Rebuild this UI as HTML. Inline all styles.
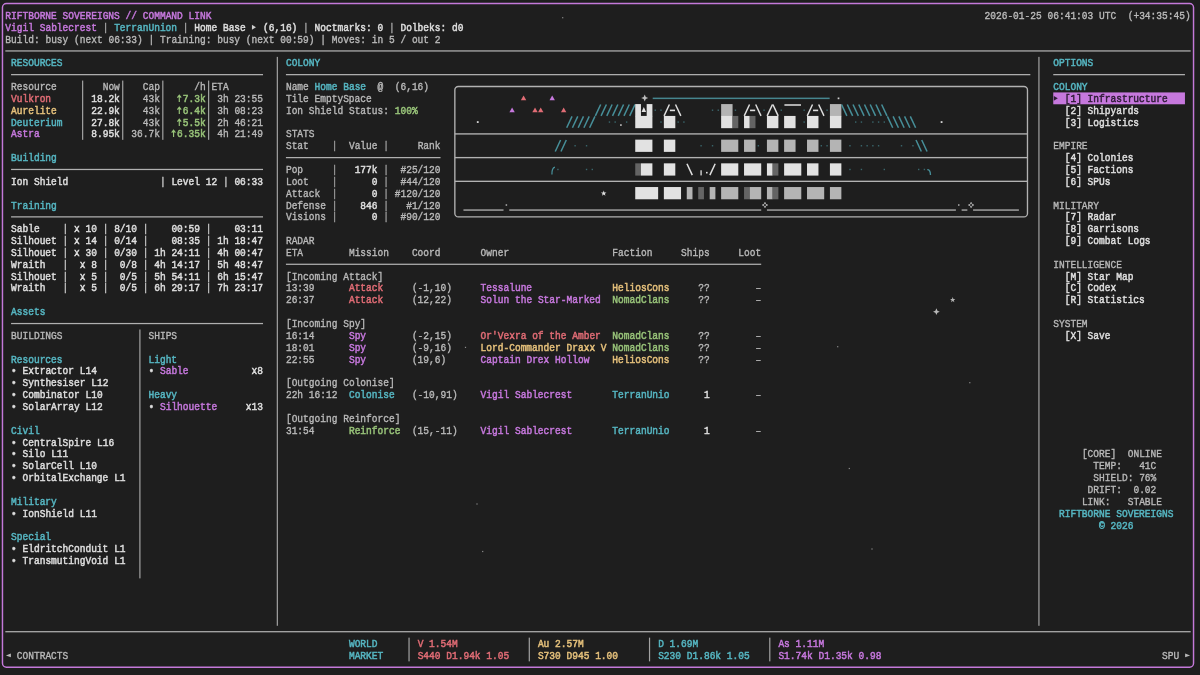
<!DOCTYPE html>
<html><head><meta charset="utf-8"><title>Riftborne Sovereigns // Command Link</title>
<style>
html,body{margin:0;padding:0;background:#1e1e1e;}
#scr{position:relative;width:1200px;height:675px;overflow:hidden;background:#1e1e1e;font-family:"Liberation Mono",monospace;font-size:9.5423px;line-height:11.8525px;letter-spacing:0;color:#b4b4b4;filter:blur(0.45px);}
#scr svg{position:absolute;left:0;top:0;}
.row{position:absolute;left:0;width:1200px;height:10.7750px;line-height:10.7750px;transform:scaleY(1.1);transform-origin:0 0;will-change:transform;}
.row i{position:absolute;top:0;display:block;font-style:normal;white-space:pre;height:10.7750px;}
.g{color:#b9b9b9;-webkit-text-stroke:0.34px currentColor;}
.w{color:#dedede;-webkit-text-stroke:0.45px currentColor;}
.p{color:#c678dd;-webkit-text-stroke:0.45px currentColor;}
.c{color:#56b6c2;-webkit-text-stroke:0.45px currentColor;}
.r{color:#e06c75;-webkit-text-stroke:0.45px currentColor;}
.y{color:#e5c07b;-webkit-text-stroke:0.45px currentColor;}
.n{color:#98c379;-webkit-text-stroke:0.45px currentColor;}
.d{color:#9c9c9c;-webkit-text-stroke:0.34px currentColor;}
.k{color:#2d1b35;-webkit-text-stroke:0.45px currentColor;}
.h{color:#a8a8a8;-webkit-text-stroke:0.34px currentColor;}
.v{color:#c4c4c4;-webkit-text-stroke:0.4px currentColor;}
</style></head><body>
<div id="scr">
<svg width="1200" height="675" viewBox="0 0 1200 675" shape-rendering="geometricPrecision">
<rect x="5.33" y="50.32" width="1185.34" height="1.25" fill="#b0b0b0"/>
<rect x="11.06" y="74.02" width="251.96" height="1.25" fill="#b0b0b0"/>
<rect x="82.04" y="80.57" width="1.2" height="59.26" fill="#a2a2a2"/>
<rect x="122.12" y="80.57" width="1.2" height="59.26" fill="#a2a2a2"/>
<rect x="162.21" y="80.57" width="1.2" height="59.26" fill="#a2a2a2"/>
<rect x="208.02" y="80.57" width="1.2" height="59.26" fill="#a2a2a2"/>
<path d="M179.29,101.90 L179.29,95.40 M177.39,97.70 L179.29,95.30 L181.19,97.70" fill="none" stroke="#98c379" stroke-width="1.15" stroke-linejoin="miter"/>
<path d="M179.29,113.90 L179.29,107.40 M177.39,109.70 L179.29,107.30 L181.19,109.70" fill="none" stroke="#98c379" stroke-width="1.15" stroke-linejoin="miter"/>
<path d="M179.29,125.90 L179.29,119.40 M177.39,121.70 L179.29,119.30 L181.19,121.70" fill="none" stroke="#98c379" stroke-width="1.15" stroke-linejoin="miter"/>
<path d="M173.56,136.90 L173.56,130.40 M171.66,132.70 L173.56,130.30 L175.46,132.70" fill="none" stroke="#98c379" stroke-width="1.15" stroke-linejoin="miter"/>
<rect x="11.06" y="168.84" width="251.96" height="1.25" fill="#b0b0b0"/>
<rect x="11.06" y="216.25" width="251.96" height="1.25" fill="#b0b0b0"/>
<rect x="11.06" y="322.92" width="251.96" height="1.25" fill="#b0b0b0"/>
<rect x="139.30" y="329.47" width="1.2" height="248.90" fill="#a2a2a2"/>
<rect x="276.73" y="56.87" width="1.2" height="568.92" fill="#a2a2a2"/>
<rect x="285.92" y="74.02" width="744.42" height="1.25" fill="#b0b0b0"/>
<rect x="285.92" y="156.99" width="154.61" height="1.25" fill="#b0b0b0"/>
<rect x="285.92" y="263.66" width="475.28" height="1.25" fill="#b0b0b0"/>
<rect x="1038.33" y="56.87" width="1.2" height="568.92" fill="#a2a2a2"/>
<rect x="1053.25" y="74.02" width="131.70" height="1.25" fill="#b0b0b0"/>
<rect x="1053.25" y="92.42" width="131.70" height="11.8525" fill="#c678dd"/>
<rect x="5.33" y="631.09" width="1185.34" height="1.25" fill="#b0b0b0"/>
<rect x="408.44" y="637.64" width="1.2" height="23.71" fill="#a2a2a2"/>
<rect x="528.69" y="637.64" width="1.2" height="23.71" fill="#a2a2a2"/>
<rect x="648.94" y="637.64" width="1.2" height="23.71" fill="#a2a2a2"/>
<rect x="769.19" y="637.64" width="1.2" height="23.71" fill="#a2a2a2"/>
<polygon points="251.93,24.84 255.93,27.24 251.93,29.64" fill="#cfcfcf"/>
<polygon points="1053.81,95.95 1057.81,98.35 1053.81,100.75" fill="#2d1b35"/>
<polygon points="10.90,653.52 5.90,655.42 10.90,657.32" fill="#b9b9b9"/>
<polygon points="1185.11,653.52 1190.11,655.42 1185.11,657.32" fill="#b9b9b9"/>
<rect x="2.47" y="3.53" width="1191.07" height="663.74" rx="4" ry="4" fill="none" stroke="#c479da" stroke-width="1.45"/>
<rect x="454.85" y="86.50" width="572.63" height="130.38" rx="3.5" ry="3.5" fill="none" stroke="#b2b2b2" stroke-width="1.35"/>
<rect x="454.85" y="133.24" width="572.63" height="1.35" fill="#b2b2b2"/>
<rect x="454.85" y="156.94" width="572.63" height="1.35" fill="#b2b2b2"/>
<rect x="454.85" y="180.65" width="572.63" height="1.35" fill="#b2b2b2"/>
<polygon points="523.56,95.60 526.26,100.30 520.86,100.30" fill="#e06c75"/>
<polygon points="552.19,95.60 554.89,100.30 549.49,100.30" fill="#c678dd"/>
<polygon points="644.72,94.55 645.77,97.00 648.22,98.05 645.77,99.10 644.72,101.55 643.67,99.10 641.22,98.05 643.67,97.00" fill="#bcbcbc"/>
<rect x="652.71" y="97.60" width="176.92" height="1.5" fill="#46868f"/>
<rect x="837.66" y="97.50" width="1.7" height="1.7" fill="#d0d0d0"/>
<polygon points="512.11,107.45 514.81,112.15 509.41,112.15" fill="#c678dd"/>
<polygon points="535.02,107.45 537.72,112.15 532.32,112.15" fill="#e06c75"/>
<polygon points="540.74,107.45 543.44,112.15 538.04,112.15" fill="#e06c75"/>
<polygon points="563.65,107.45 566.35,112.15 560.95,112.15" fill="#e06c75"/>
<line x1="595.34" y1="115.93" x2="600.67" y2="104.48" stroke="#478f99" stroke-width="1.5"/>
<line x1="601.07" y1="115.93" x2="606.39" y2="104.48" stroke="#478f99" stroke-width="1.5"/>
<line x1="606.79" y1="115.93" x2="612.12" y2="104.48" stroke="#478f99" stroke-width="1.5"/>
<line x1="612.52" y1="115.93" x2="617.85" y2="104.48" stroke="#478f99" stroke-width="1.5"/>
<line x1="618.25" y1="115.93" x2="623.57" y2="104.48" stroke="#478f99" stroke-width="1.5"/>
<line x1="623.97" y1="115.93" x2="629.30" y2="104.48" stroke="#478f99" stroke-width="1.5"/>
<line x1="629.70" y1="115.93" x2="635.03" y2="104.48" stroke="#478f99" stroke-width="1.5"/>
<rect x="635.23" y="104.08" width="5.73" height="12.25" fill="#e2e2e2"/>
<rect x="646.68" y="104.08" width="5.73" height="12.25" fill="#e2e2e2"/>
<polygon points="643.82,106.88 646.12,112.08 641.52,112.08" fill="#e2e2e2"/>
<rect x="654.57" y="109.50" width="1.4" height="1.4" fill="#3a676d"/>
<rect x="660.29" y="109.50" width="1.4" height="1.4" fill="#3a676d"/>
<rect x="711.83" y="109.50" width="1.4" height="1.4" fill="#3a676d"/>
<rect x="717.56" y="109.50" width="1.4" height="1.4" fill="#3a676d"/>
<rect x="734.74" y="109.50" width="1.4" height="1.4" fill="#3a676d"/>
<rect x="763.37" y="109.50" width="1.4" height="1.4" fill="#3a676d"/>
<rect x="780.55" y="109.50" width="1.4" height="1.4" fill="#3a676d"/>
<rect x="803.45" y="109.50" width="1.4" height="1.4" fill="#3a676d"/>
<rect x="826.36" y="109.50" width="1.4" height="1.4" fill="#3a676d"/>
<line x1="664.06" y1="115.93" x2="669.38" y2="104.48" stroke="#e0e0e0" stroke-width="1.45"/>
<rect x="669.88" y="109.60" width="5.13" height="1.6" fill="#e0e0e0"/>
<line x1="675.51" y1="104.48" x2="680.84" y2="115.93" stroke="#e0e0e0" stroke-width="1.45"/>
<rect x="721.12" y="104.08" width="11.45" height="12.25" fill="#b4b4b4"/>
<line x1="744.23" y1="115.93" x2="749.55" y2="104.48" stroke="#e0e0e0" stroke-width="1.45"/>
<rect x="750.05" y="109.60" width="5.13" height="1.6" fill="#e0e0e0"/>
<line x1="755.68" y1="104.48" x2="761.00" y2="115.93" stroke="#e0e0e0" stroke-width="1.45"/>
<line x1="767.13" y1="115.93" x2="772.46" y2="104.48" stroke="#e0e0e0" stroke-width="1.5"/>
<line x1="772.86" y1="104.48" x2="778.18" y2="115.93" stroke="#e0e0e0" stroke-width="1.5"/>
<rect x="784.41" y="104.25" width="16.58" height="1.5" fill="#e0e0e0"/>
<line x1="807.22" y1="115.93" x2="812.54" y2="104.48" stroke="#e0e0e0" stroke-width="1.45"/>
<rect x="813.04" y="109.60" width="5.13" height="1.6" fill="#e0e0e0"/>
<line x1="818.67" y1="104.48" x2="823.99" y2="115.93" stroke="#e0e0e0" stroke-width="1.45"/>
<rect x="829.92" y="104.08" width="11.45" height="12.25" fill="#b4b4b4"/>
<line x1="841.57" y1="104.48" x2="846.90" y2="115.93" stroke="#478f99" stroke-width="1.5"/>
<line x1="847.30" y1="104.48" x2="852.63" y2="115.93" stroke="#478f99" stroke-width="1.5"/>
<line x1="853.03" y1="104.48" x2="858.35" y2="115.93" stroke="#478f99" stroke-width="1.5"/>
<line x1="858.75" y1="104.48" x2="864.08" y2="115.93" stroke="#478f99" stroke-width="1.5"/>
<line x1="864.48" y1="104.48" x2="869.80" y2="115.93" stroke="#478f99" stroke-width="1.5"/>
<line x1="870.20" y1="104.48" x2="875.53" y2="115.93" stroke="#478f99" stroke-width="1.5"/>
<line x1="875.93" y1="104.48" x2="881.26" y2="115.93" stroke="#478f99" stroke-width="1.5"/>
<line x1="881.66" y1="104.48" x2="886.98" y2="115.93" stroke="#478f99" stroke-width="1.5"/>
<rect x="476.85" y="121.16" width="1.8" height="1.8" fill="#d8d8d8"/>
<line x1="566.71" y1="127.78" x2="572.04" y2="116.33" stroke="#478f99" stroke-width="1.5"/>
<line x1="572.44" y1="127.78" x2="577.76" y2="116.33" stroke="#478f99" stroke-width="1.5"/>
<line x1="578.16" y1="127.78" x2="583.49" y2="116.33" stroke="#478f99" stroke-width="1.5"/>
<line x1="583.89" y1="127.78" x2="589.22" y2="116.33" stroke="#478f99" stroke-width="1.5"/>
<line x1="589.62" y1="127.78" x2="594.94" y2="116.33" stroke="#478f99" stroke-width="1.5"/>
<rect x="608.76" y="121.36" width="1.4" height="1.4" fill="#3a676d"/>
<rect x="614.48" y="121.36" width="1.4" height="1.4" fill="#3a676d"/>
<rect x="625.94" y="121.36" width="1.4" height="1.4" fill="#3a676d"/>
<rect x="620.11" y="124.26" width="1.6" height="1.6" fill="#c8c8c8"/>
<rect x="635.23" y="115.93" width="17.18" height="12.25" fill="#e2e2e2"/>
<rect x="660.29" y="121.36" width="1.4" height="1.4" fill="#3a676d"/>
<rect x="677.47" y="121.36" width="1.4" height="1.4" fill="#3a676d"/>
<rect x="683.20" y="121.36" width="1.4" height="1.4" fill="#3a676d"/>
<rect x="803.45" y="121.36" width="1.4" height="1.4" fill="#3a676d"/>
<rect x="854.99" y="121.36" width="1.4" height="1.4" fill="#3a676d"/>
<rect x="860.72" y="121.36" width="1.4" height="1.4" fill="#3a676d"/>
<rect x="872.17" y="121.36" width="1.4" height="1.4" fill="#3a676d"/>
<rect x="877.89" y="121.36" width="1.4" height="1.4" fill="#3a676d"/>
<rect x="883.62" y="121.36" width="1.4" height="1.4" fill="#3a676d"/>
<rect x="663.86" y="115.93" width="11.45" height="12.25" fill="#e2e2e2"/>
<rect x="721.12" y="115.93" width="11.45" height="12.25" fill="#e2e2e2"/>
<rect x="732.57" y="115.93" width="5.73" height="12.25" fill="#646464"/>
<rect x="744.03" y="115.93" width="5.73" height="12.25" fill="#e2e2e2"/>
<rect x="749.75" y="115.93" width="5.73" height="12.25" fill="#646464"/>
<rect x="766.93" y="115.93" width="11.45" height="12.25" fill="#e2e2e2"/>
<rect x="784.11" y="115.93" width="11.45" height="12.25" fill="#e2e2e2"/>
<rect x="807.02" y="115.93" width="11.45" height="12.25" fill="#e2e2e2"/>
<rect x="829.92" y="115.93" width="11.45" height="12.25" fill="#e2e2e2"/>
<line x1="887.38" y1="116.33" x2="892.71" y2="127.78" stroke="#478f99" stroke-width="1.5"/>
<line x1="893.11" y1="116.33" x2="898.44" y2="127.78" stroke="#478f99" stroke-width="1.5"/>
<line x1="898.84" y1="116.33" x2="904.16" y2="127.78" stroke="#478f99" stroke-width="1.5"/>
<line x1="904.56" y1="116.33" x2="909.89" y2="127.78" stroke="#478f99" stroke-width="1.5"/>
<line x1="910.29" y1="116.33" x2="915.62" y2="127.78" stroke="#478f99" stroke-width="1.5"/>
<rect x="940.68" y="121.16" width="1.8" height="1.8" fill="#d8d8d8"/>
<line x1="555.26" y1="151.49" x2="560.58" y2="140.03" stroke="#478f99" stroke-width="1.5"/>
<line x1="560.98" y1="151.49" x2="566.31" y2="140.03" stroke="#478f99" stroke-width="1.5"/>
<rect x="574.40" y="145.06" width="1.4" height="1.4" fill="#3a676d"/>
<rect x="585.85" y="145.06" width="1.4" height="1.4" fill="#3a676d"/>
<rect x="700.38" y="145.06" width="1.4" height="1.4" fill="#3a676d"/>
<rect x="711.83" y="145.06" width="1.4" height="1.4" fill="#3a676d"/>
<rect x="757.64" y="145.06" width="1.4" height="1.4" fill="#3a676d"/>
<rect x="820.63" y="145.06" width="1.4" height="1.4" fill="#3a676d"/>
<rect x="826.36" y="145.06" width="1.4" height="1.4" fill="#3a676d"/>
<rect x="849.26" y="145.06" width="1.4" height="1.4" fill="#3a676d"/>
<rect x="860.72" y="145.06" width="1.4" height="1.4" fill="#3a676d"/>
<rect x="866.44" y="145.06" width="1.4" height="1.4" fill="#3a676d"/>
<rect x="872.17" y="145.06" width="1.4" height="1.4" fill="#3a676d"/>
<rect x="877.89" y="145.06" width="1.4" height="1.4" fill="#3a676d"/>
<rect x="900.80" y="145.06" width="1.4" height="1.4" fill="#3a676d"/>
<rect x="912.25" y="145.06" width="1.4" height="1.4" fill="#3a676d"/>
<rect x="635.23" y="139.63" width="17.18" height="12.25" fill="#e2e2e2"/>
<rect x="663.86" y="139.63" width="11.45" height="12.25" fill="#e2e2e2"/>
<rect x="721.12" y="139.63" width="17.18" height="12.25" fill="#b4b4b4"/>
<rect x="744.03" y="139.63" width="11.45" height="12.25" fill="#b4b4b4"/>
<rect x="766.93" y="139.63" width="11.45" height="12.25" fill="#b4b4b4"/>
<rect x="784.11" y="139.63" width="11.45" height="12.25" fill="#b4b4b4"/>
<rect x="807.02" y="139.63" width="11.45" height="12.25" fill="#b4b4b4"/>
<rect x="829.92" y="139.63" width="11.45" height="12.25" fill="#b4b4b4"/>
<line x1="916.02" y1="140.03" x2="921.34" y2="151.49" stroke="#478f99" stroke-width="1.5"/>
<line x1="921.74" y1="140.03" x2="927.07" y2="151.49" stroke="#478f99" stroke-width="1.5"/>
<path d="M551.93,174.54 Q551.73,167.94 554.93,167.14" fill="none" stroke="#478f99" stroke-width="1.3"/>
<rect x="557.22" y="168.77" width="1.4" height="1.4" fill="#3a676d"/>
<rect x="585.85" y="168.77" width="1.4" height="1.4" fill="#3a676d"/>
<rect x="591.58" y="168.77" width="1.4" height="1.4" fill="#3a676d"/>
<rect x="849.26" y="168.77" width="1.4" height="1.4" fill="#3a676d"/>
<rect x="860.72" y="168.77" width="1.4" height="1.4" fill="#3a676d"/>
<rect x="883.62" y="168.77" width="1.4" height="1.4" fill="#3a676d"/>
<rect x="917.98" y="168.77" width="1.4" height="1.4" fill="#3a676d"/>
<rect x="923.70" y="168.77" width="1.4" height="1.4" fill="#3a676d"/>
<rect x="635.23" y="163.34" width="5.73" height="12.25" fill="#646464"/>
<rect x="640.95" y="163.34" width="11.45" height="12.25" fill="#e2e2e2"/>
<rect x="663.86" y="163.34" width="11.45" height="12.25" fill="#e2e2e2"/>
<line x1="686.96" y1="163.74" x2="692.29" y2="175.19" stroke="#e0e0e0" stroke-width="1.5"/>
<rect x="700.43" y="170.27" width="1.3" height="5.13" fill="#e0e0e0"/>
<rect x="706.01" y="171.87" width="1.6" height="1.6" fill="#e0e0e0"/>
<line x1="709.87" y1="175.19" x2="715.19" y2="163.74" stroke="#e0e0e0" stroke-width="1.5"/>
<rect x="721.12" y="163.34" width="17.18" height="12.25" fill="#e2e2e2"/>
<rect x="744.03" y="163.34" width="17.18" height="12.25" fill="#e2e2e2"/>
<rect x="766.93" y="163.34" width="5.73" height="12.25" fill="#e2e2e2"/>
<rect x="772.66" y="163.34" width="5.73" height="12.25" fill="#646464"/>
<rect x="784.11" y="163.34" width="17.18" height="12.25" fill="#e2e2e2"/>
<rect x="807.02" y="163.34" width="11.45" height="12.25" fill="#e2e2e2"/>
<rect x="829.92" y="163.34" width="11.45" height="12.25" fill="#e2e2e2"/>
<path d="M927.27,169.67 Q930.47,169.67 930.47,174.99" fill="none" stroke="#478f99" stroke-width="1.3"/>
<polygon points="603.73,190.47 604.45,192.38 606.49,192.47 604.89,193.75 605.44,195.72 603.73,194.59 602.03,195.72 602.57,193.75 600.97,192.47 603.02,192.38" fill="#e0e0e0"/>
<rect x="635.23" y="187.04" width="22.91" height="12.25" fill="#e2e2e2"/>
<rect x="663.86" y="187.04" width="17.18" height="12.25" fill="#e2e2e2"/>
<rect x="686.76" y="187.04" width="5.73" height="12.25" fill="#b4b4b4"/>
<rect x="698.22" y="187.04" width="5.73" height="12.25" fill="#646464"/>
<rect x="709.67" y="187.04" width="5.73" height="12.25" fill="#b4b4b4"/>
<rect x="721.12" y="187.04" width="17.18" height="12.25" fill="#b4b4b4"/>
<rect x="744.03" y="187.04" width="5.73" height="12.25" fill="#646464"/>
<rect x="749.75" y="187.04" width="11.45" height="12.25" fill="#b4b4b4"/>
<rect x="766.93" y="187.04" width="5.73" height="12.25" fill="#b4b4b4"/>
<rect x="772.66" y="187.04" width="5.73" height="12.25" fill="#646464"/>
<rect x="784.11" y="187.04" width="17.18" height="12.25" fill="#b4b4b4"/>
<rect x="807.02" y="187.04" width="17.18" height="12.25" fill="#b4b4b4"/>
<rect x="829.92" y="187.04" width="11.45" height="12.25" fill="#b4b4b4"/>
<rect x="463.44" y="209.40" width="40.08" height="1.3" fill="#b2b2b2"/>
<rect x="509.25" y="209.40" width="251.96" height="1.3" fill="#b2b2b2"/>
<rect x="766.93" y="209.40" width="188.97" height="1.3" fill="#b2b2b2"/>
<rect x="961.63" y="209.40" width="5.73" height="1.3" fill="#b2b2b2"/>
<rect x="973.08" y="209.40" width="45.81" height="1.3" fill="#b2b2b2"/>
<rect x="505.63" y="204.27" width="1.5" height="1.5" fill="#b0b0b0"/>
<rect x="958.01" y="204.27" width="1.5" height="1.5" fill="#b0b0b0"/>
<polygon points="764.97,202.32 765.78,204.21 767.67,205.02 765.78,205.83 764.97,207.72 764.16,205.83 762.27,205.02 764.16,204.21" fill="none" stroke="#b0b0b0" stroke-width="0.9"/>
<polygon points="971.11,202.32 971.92,204.21 973.81,205.02 971.92,205.83 971.11,207.72 970.30,205.83 968.41,205.02 970.30,204.21" fill="none" stroke="#b0b0b0" stroke-width="0.9"/>
<rect x="562.10" y="17.10" width="1.2" height="1.2" fill="#8c8c8c"/>
<rect x="464.90" y="346.80" width="1.2" height="1.2" fill="#8c8c8c"/>
<rect x="476.40" y="503.40" width="1.2" height="1.2" fill="#8c8c8c"/>
<rect x="482.10" y="550.90" width="1.2" height="1.2" fill="#8c8c8c"/>
<rect x="848.70" y="467.90" width="1.2" height="1.2" fill="#8c8c8c"/>
<rect x="871.40" y="548.40" width="1.2" height="1.2" fill="#8c8c8c"/>
<rect x="837.10" y="346.10" width="1.2" height="1.2" fill="#8c8c8c"/>
<rect x="969.20" y="382.10" width="1.2" height="1.2" fill="#8c8c8c"/>
<polygon points="952.70,297.10 953.39,298.95 955.36,299.03 953.82,300.26 954.35,302.17 952.70,301.08 951.05,302.17 951.58,300.26 950.04,299.03 952.01,298.95" fill="#b2b2b2"/>
<polygon points="936.40,308.30 937.42,310.68 939.80,311.70 937.42,312.72 936.40,315.10 935.38,312.72 933.00,311.70 935.38,310.68" fill="#b8b8b8"/>
</svg>
<div class="row" style="top:11px"><i class="p" style="left:5.33px">RIFTBORNE</i><i class="p" style="left:62.60px">SOVEREIGNS</i><i class="p" style="left:125.59px">//</i><i class="p" style="left:142.76px">COMMAND</i><i class="p" style="left:188.57px">LINK</i><i class="g" style="left:984.53px">2026-01-25</i><i class="g" style="left:1047.52px">06:41:03</i><i class="g" style="left:1099.06px">UTC</i><i class="g" style="left:1127.69px">(+34:35:45)</i></div>
<div class="row" style="top:23px"><i class="p" style="left:5.33px">Vigil</i><i class="p" style="left:39.69px">Sablecrest</i><i class="h" style="left:102.68px">|</i><i class="c" style="left:114.13px">TerranUnion</i><i class="h" style="left:182.85px">|</i><i class="w" style="left:194.30px">Home</i><i class="w" style="left:222.93px">Base</i><i class="w" style="left:263.02px">(6,16)</i><i class="h" style="left:303.10px">|</i><i class="w" style="left:314.55px">Noctmarks:</i><i class="w" style="left:377.54px">0</i><i class="h" style="left:389.00px">|</i><i class="w" style="left:400.45px">Dolbeks:</i><i class="w" style="left:451.98px">d0</i></div>
<div class="row" style="top:35px"><i class="g" style="left:5.33px">Build:</i><i class="g" style="left:45.42px">busy</i><i class="g" style="left:74.05px">(next</i><i class="g" style="left:108.41px">06:33)</i><i class="g" style="left:148.49px">|</i><i class="g" style="left:159.94px">Training:</i><i class="g" style="left:217.21px">busy</i><i class="g" style="left:245.84px">(next</i><i class="g" style="left:280.20px">00:59)</i><i class="g" style="left:320.28px">|</i><i class="g" style="left:331.73px">Moves:</i><i class="g" style="left:371.82px">in</i><i class="g" style="left:389.00px">5</i><i class="g" style="left:400.45px">/</i><i class="g" style="left:411.90px">out</i><i class="g" style="left:434.81px">2</i></div>
<div class="row" style="top:58px"><i class="c" style="left:11.06px">RESOURCES</i><i class="c" style="left:285.92px">COLONY</i><i class="c" style="left:1053.25px">OPTIONS</i></div>
<div class="row" style="top:82px"><i class="g" style="left:11.06px">Resource</i><i class="g" style="left:102.68px">Now</i><i class="g" style="left:142.76px">Cap</i><i class="g" style="left:194.30px">/h</i><i class="g" style="left:211.48px">ETA</i><i class="g" style="left:285.92px">Name</i><i class="c" style="left:314.55px">Home</i><i class="c" style="left:343.19px">Base</i><i class="g" style="left:377.54px">@</i><i class="g" style="left:394.72px">(6,16)</i><i class="c" style="left:1053.25px">COLONY</i></div>
<div class="row" style="top:94px"><i class="r" style="left:11.06px">Vulkron</i><i class="w" style="left:91.23px">18.2k</i><i class="g" style="left:142.76px">43k</i><i class="n" style="left:182.85px">7.3k</i><i class="g" style="left:217.21px">3h</i><i class="g" style="left:234.39px">23:55</i><i class="g" style="left:285.92px">Tile</i><i class="g" style="left:314.55px">EmptySpace</i><i class="k" style="left:1064.70px">[1]</i><i class="k" style="left:1087.60px">Infrastructure</i></div>
<div class="row" style="top:106px"><i class="y" style="left:11.06px">Aurelite</i><i class="w" style="left:91.23px">22.9k</i><i class="g" style="left:142.76px">43k</i><i class="n" style="left:182.85px">6.4k</i><i class="g" style="left:217.21px">3h</i><i class="g" style="left:234.39px">08:23</i><i class="g" style="left:285.92px">Ion</i><i class="g" style="left:308.83px">Shield</i><i class="g" style="left:348.91px">Status:</i><i class="n" style="left:394.72px">100%</i><i class="w" style="left:1064.70px">[2]</i><i class="w" style="left:1087.60px">Shipyards</i></div>
<div class="row" style="top:118px"><i class="c" style="left:11.06px">Deuterium</i><i class="w" style="left:91.23px">27.8k</i><i class="g" style="left:142.76px">43k</i><i class="n" style="left:182.85px">5.5k</i><i class="g" style="left:217.21px">2h</i><i class="g" style="left:234.39px">46:21</i><i class="w" style="left:1064.70px">[3]</i><i class="w" style="left:1087.60px">Logistics</i></div>
<div class="row" style="top:129px"><i class="p" style="left:11.06px">Astra</i><i class="w" style="left:91.23px">8.95k</i><i class="g" style="left:131.31px">36.7k</i><i class="n" style="left:177.12px">6.35k</i><i class="g" style="left:217.21px">4h</i><i class="g" style="left:234.39px">21:49</i><i class="g" style="left:285.92px">STATS</i></div>
<div class="row" style="top:141px"><i class="g" style="left:285.92px">Stat</i><i class="d" style="left:331.73px">|</i><i class="g" style="left:348.91px">Value</i><i class="d" style="left:383.27px">|</i><i class="g" style="left:417.63px">Rank</i><i class="g" style="left:1053.25px">EMPIRE</i></div>
<div class="row" style="top:153px"><i class="c" style="left:11.06px">Building</i><i class="w" style="left:1064.70px">[4]</i><i class="w" style="left:1087.60px">Colonies</i></div>
<div class="row" style="top:165px"><i class="g" style="left:285.92px">Pop</i><i class="d" style="left:331.73px">|</i><i class="w" style="left:354.64px">177k</i><i class="d" style="left:383.27px">|</i><i class="g" style="left:400.45px">#25/120</i><i class="w" style="left:1064.70px">[5]</i><i class="w" style="left:1087.60px">Factions</i></div>
<div class="row" style="top:177px"><i class="w" style="left:11.06px">Ion</i><i class="w" style="left:33.96px">Shield</i><i class="v" style="left:159.94px">|</i><i class="w" style="left:171.40px">Level</i><i class="w" style="left:205.75px">12</i><i class="v" style="left:222.93px">|</i><i class="w" style="left:234.39px">06:33</i><i class="g" style="left:285.92px">Loot</i><i class="d" style="left:331.73px">|</i><i class="w" style="left:371.82px">0</i><i class="d" style="left:383.27px">|</i><i class="g" style="left:400.45px">#44/120</i><i class="w" style="left:1064.70px">[6]</i><i class="w" style="left:1087.60px">SPUs</i></div>
<div class="row" style="top:189px"><i class="g" style="left:285.92px">Attack</i><i class="d" style="left:331.73px">|</i><i class="w" style="left:371.82px">0</i><i class="d" style="left:383.27px">|</i><i class="g" style="left:394.72px">#120/120</i></div>
<div class="row" style="top:201px"><i class="c" style="left:11.06px">Training</i><i class="g" style="left:285.92px">Defense</i><i class="d" style="left:331.73px">|</i><i class="w" style="left:360.36px">846</i><i class="d" style="left:383.27px">|</i><i class="g" style="left:406.17px">#1/120</i><i class="g" style="left:1053.25px">MILITARY</i></div>
<div class="row" style="top:212px"><i class="g" style="left:285.92px">Visions</i><i class="d" style="left:331.73px">|</i><i class="w" style="left:371.82px">0</i><i class="d" style="left:383.27px">|</i><i class="g" style="left:400.45px">#90/120</i><i class="w" style="left:1064.70px">[7]</i><i class="w" style="left:1087.60px">Radar</i></div>
<div class="row" style="top:224px"><i class="w" style="left:11.06px">Sable</i><i class="v" style="left:62.60px">|</i><i class="w" style="left:74.05px">x</i><i class="w" style="left:85.50px">10</i><i class="v" style="left:102.68px">|</i><i class="w" style="left:114.13px">8/10</i><i class="v" style="left:142.76px">|</i><i class="w" style="left:171.40px">00:59</i><i class="v" style="left:205.75px">|</i><i class="w" style="left:234.39px">03:11</i><i class="w" style="left:1064.70px">[8]</i><i class="w" style="left:1087.60px">Garrisons</i></div>
<div class="row" style="top:236px"><i class="w" style="left:11.06px">Silhouet</i><i class="v" style="left:62.60px">|</i><i class="w" style="left:74.05px">x</i><i class="w" style="left:85.50px">14</i><i class="v" style="left:102.68px">|</i><i class="w" style="left:114.13px">0/14</i><i class="v" style="left:142.76px">|</i><i class="w" style="left:171.40px">08:35</i><i class="v" style="left:205.75px">|</i><i class="w" style="left:217.21px">1h</i><i class="w" style="left:234.39px">18:47</i><i class="g" style="left:285.92px">RADAR</i><i class="w" style="left:1064.70px">[9]</i><i class="w" style="left:1087.60px">Combat</i><i class="w" style="left:1127.69px">Logs</i></div>
<div class="row" style="top:248px"><i class="w" style="left:11.06px">Silhouet</i><i class="v" style="left:62.60px">|</i><i class="w" style="left:74.05px">x</i><i class="w" style="left:85.50px">30</i><i class="v" style="left:102.68px">|</i><i class="w" style="left:114.13px">0/30</i><i class="v" style="left:142.76px">|</i><i class="w" style="left:154.22px">1h</i><i class="w" style="left:171.40px">24:11</i><i class="v" style="left:205.75px">|</i><i class="w" style="left:217.21px">4h</i><i class="w" style="left:234.39px">00:47</i><i class="g" style="left:285.92px">ETA</i><i class="g" style="left:348.91px">Mission</i><i class="g" style="left:411.90px">Coord</i><i class="g" style="left:480.62px">Owner</i><i class="g" style="left:612.32px">Faction</i><i class="g" style="left:681.04px">Ships</i><i class="g" style="left:738.30px">Loot</i></div>
<div class="row" style="top:260px"><i class="w" style="left:11.06px">Wraith</i><i class="v" style="left:62.60px">|</i><i class="w" style="left:79.78px">x</i><i class="w" style="left:91.23px">8</i><i class="v" style="left:102.68px">|</i><i class="w" style="left:119.86px">0/8</i><i class="v" style="left:142.76px">|</i><i class="w" style="left:154.22px">4h</i><i class="w" style="left:171.40px">14:17</i><i class="v" style="left:205.75px">|</i><i class="w" style="left:217.21px">5h</i><i class="w" style="left:234.39px">48:47</i><i class="g" style="left:1053.25px">INTELLIGENCE</i></div>
<div class="row" style="top:272px"><i class="w" style="left:11.06px">Silhouet</i><i class="v" style="left:62.60px">|</i><i class="w" style="left:79.78px">x</i><i class="w" style="left:91.23px">5</i><i class="v" style="left:102.68px">|</i><i class="w" style="left:119.86px">0/5</i><i class="v" style="left:142.76px">|</i><i class="w" style="left:154.22px">5h</i><i class="w" style="left:171.40px">54:11</i><i class="v" style="left:205.75px">|</i><i class="w" style="left:217.21px">6h</i><i class="w" style="left:234.39px">15:47</i><i class="g" style="left:285.92px">[Incoming</i><i class="g" style="left:343.19px">Attack]</i><i class="w" style="left:1064.70px">[M]</i><i class="w" style="left:1087.60px">Star</i><i class="w" style="left:1116.24px">Map</i></div>
<div class="row" style="top:283px"><i class="w" style="left:11.06px">Wraith</i><i class="v" style="left:62.60px">|</i><i class="w" style="left:79.78px">x</i><i class="w" style="left:91.23px">5</i><i class="v" style="left:102.68px">|</i><i class="w" style="left:119.86px">0/5</i><i class="v" style="left:142.76px">|</i><i class="w" style="left:154.22px">6h</i><i class="w" style="left:171.40px">29:17</i><i class="v" style="left:205.75px">|</i><i class="w" style="left:217.21px">7h</i><i class="w" style="left:234.39px">23:17</i><i class="g" style="left:285.92px">13:39</i><i class="r" style="left:348.91px">Attack</i><i class="g" style="left:411.90px">(-1,10)</i><i class="p" style="left:480.62px">Tessalune</i><i class="y" style="left:612.32px">HeliosCons</i><i class="g" style="left:698.22px">??</i><i class="g" style="left:755.48px">–</i><i class="w" style="left:1064.70px">[C]</i><i class="w" style="left:1087.60px">Codex</i></div>
<div class="row" style="top:295px"><i class="g" style="left:285.92px">26:37</i><i class="r" style="left:348.91px">Attack</i><i class="g" style="left:411.90px">(12,22)</i><i class="p" style="left:480.62px">Solun</i><i class="p" style="left:514.97px">the</i><i class="p" style="left:537.88px">Star-Marked</i><i class="n" style="left:612.32px">NomadClans</i><i class="g" style="left:698.22px">??</i><i class="g" style="left:755.48px">–</i><i class="w" style="left:1064.70px">[R]</i><i class="w" style="left:1087.60px">Statistics</i></div>
<div class="row" style="top:307px"><i class="c" style="left:11.06px">Assets</i></div>
<div class="row" style="top:319px"><i class="g" style="left:285.92px">[Incoming</i><i class="g" style="left:343.19px">Spy]</i><i class="g" style="left:1053.25px">SYSTEM</i></div>
<div class="row" style="top:331px"><i class="g" style="left:11.06px">BUILDINGS</i><i class="g" style="left:148.49px">SHIPS</i><i class="g" style="left:285.92px">16:14</i><i class="p" style="left:348.91px">Spy</i><i class="g" style="left:411.90px">(-2,15)</i><i class="r" style="left:480.62px">Or'Vexra</i><i class="r" style="left:532.15px">of</i><i class="r" style="left:549.33px">the</i><i class="r" style="left:572.24px">Amber</i><i class="n" style="left:612.32px">NomadClans</i><i class="g" style="left:698.22px">??</i><i class="g" style="left:755.48px">–</i><i class="w" style="left:1064.70px">[X]</i><i class="w" style="left:1087.60px">Save</i></div>
<div class="row" style="top:343px"><i class="g" style="left:285.92px">18:01</i><i class="p" style="left:348.91px">Spy</i><i class="g" style="left:411.90px">(-9,16)</i><i class="y" style="left:480.62px">Lord-Commander</i><i class="y" style="left:566.51px">Draxx</i><i class="y" style="left:600.87px">V</i><i class="n" style="left:612.32px">NomadClans</i><i class="g" style="left:698.22px">??</i><i class="g" style="left:755.48px">–</i></div>
<div class="row" style="top:355px"><i class="c" style="left:11.06px">Resources</i><i class="c" style="left:148.49px">Light</i><i class="g" style="left:285.92px">22:55</i><i class="p" style="left:348.91px">Spy</i><i class="g" style="left:411.90px">(19,6)</i><i class="p" style="left:480.62px">Captain</i><i class="p" style="left:526.43px">Drex</i><i class="p" style="left:555.06px">Hollow</i><i class="y" style="left:612.32px">HeliosCons</i><i class="g" style="left:698.22px">??</i><i class="g" style="left:755.48px">–</i></div>
<div class="row" style="top:366px"><i class="w" style="left:11.06px">•</i><i class="w" style="left:22.51px">Extractor</i><i class="w" style="left:79.78px">L14</i><i class="w" style="left:148.49px">•</i><i class="p" style="left:159.94px">Sable</i><i class="w" style="left:251.56px">x8</i></div>
<div class="row" style="top:378px"><i class="w" style="left:11.06px">•</i><i class="w" style="left:22.51px">Synthesiser</i><i class="w" style="left:91.23px">L12</i><i class="g" style="left:285.92px">[Outgoing</i><i class="g" style="left:343.19px">Colonise]</i></div>
<div class="row" style="top:390px"><i class="w" style="left:11.06px">•</i><i class="w" style="left:22.51px">Combinator</i><i class="w" style="left:85.50px">L10</i><i class="c" style="left:148.49px">Heavy</i><i class="g" style="left:285.92px">22h</i><i class="g" style="left:308.83px">16:12</i><i class="c" style="left:348.91px">Colonise</i><i class="g" style="left:411.90px">(-10,91)</i><i class="p" style="left:480.62px">Vigil</i><i class="p" style="left:514.97px">Sablecrest</i><i class="c" style="left:612.32px">TerranUnio</i><i class="w" style="left:703.94px">1</i><i class="g" style="left:755.48px">–</i></div>
<div class="row" style="top:402px"><i class="w" style="left:11.06px">•</i><i class="w" style="left:22.51px">SolarArray</i><i class="w" style="left:85.50px">L12</i><i class="w" style="left:148.49px">•</i><i class="p" style="left:159.94px">Silhouette</i><i class="w" style="left:245.84px">x13</i></div>
<div class="row" style="top:414px"><i class="g" style="left:285.92px">[Outgoing</i><i class="g" style="left:343.19px">Reinforce]</i></div>
<div class="row" style="top:426px"><i class="c" style="left:11.06px">Civil</i><i class="g" style="left:285.92px">31:54</i><i class="n" style="left:348.91px">Reinforce</i><i class="g" style="left:411.90px">(15,-11)</i><i class="p" style="left:480.62px">Vigil</i><i class="p" style="left:514.97px">Sablecrest</i><i class="c" style="left:612.32px">TerranUnio</i><i class="w" style="left:703.94px">1</i><i class="g" style="left:755.48px">–</i></div>
<div class="row" style="top:438px"><i class="w" style="left:11.06px">•</i><i class="w" style="left:22.51px">CentralSpire</i><i class="w" style="left:96.95px">L16</i></div>
<div class="row" style="top:449px"><i class="w" style="left:11.06px">•</i><i class="w" style="left:22.51px">Silo</i><i class="w" style="left:51.14px">L11</i><i class="g" style="left:1081.88px">[CORE]</i><i class="g" style="left:1127.69px">ONLINE</i></div>
<div class="row" style="top:461px"><i class="w" style="left:11.06px">•</i><i class="w" style="left:22.51px">SolarCell</i><i class="w" style="left:79.78px">L10</i><i class="g" style="left:1093.33px">TEMP:</i><i class="g" style="left:1139.14px">41C</i></div>
<div class="row" style="top:473px"><i class="w" style="left:11.06px">•</i><i class="w" style="left:22.51px">OrbitalExchange</i><i class="w" style="left:114.13px">L1</i><i class="g" style="left:1093.33px">SHIELD:</i><i class="g" style="left:1139.14px">76%</i></div>
<div class="row" style="top:485px"><i class="g" style="left:1087.60px">DRIFT:</i><i class="g" style="left:1133.41px">0.02</i></div>
<div class="row" style="top:497px"><i class="c" style="left:11.06px">Military</i><i class="g" style="left:1081.88px">LINK:</i><i class="g" style="left:1127.69px">STABLE</i></div>
<div class="row" style="top:509px"><i class="w" style="left:11.06px">•</i><i class="w" style="left:22.51px">IonShield</i><i class="w" style="left:79.78px">L11</i><i class="c" style="left:1058.97px">RIFTBORNE</i><i class="c" style="left:1116.24px">SOVEREIGNS</i></div>
<div class="row" style="top:521px"><i class="c" style="left:1099.06px">©</i><i class="c" style="left:1110.51px">2026</i></div>
<div class="row" style="top:532px"><i class="c" style="left:11.06px">Special</i></div>
<div class="row" style="top:544px"><i class="w" style="left:11.06px">•</i><i class="w" style="left:22.51px">EldritchConduit</i><i class="w" style="left:114.13px">L1</i></div>
<div class="row" style="top:556px"><i class="w" style="left:11.06px">•</i><i class="w" style="left:22.51px">TransmutingVoid</i><i class="w" style="left:114.13px">L1</i></div>
<div class="row" style="top:639px"><i class="c" style="left:348.91px">WORLD</i><i class="r" style="left:417.63px">V</i><i class="r" style="left:429.08px">1.54M</i><i class="y" style="left:537.88px">Au</i><i class="y" style="left:555.06px">2.57M</i><i class="c" style="left:658.13px">D</i><i class="c" style="left:669.58px">1.69M</i><i class="p" style="left:778.38px">As</i><i class="p" style="left:795.56px">1.11M</i></div>
<div class="row" style="top:651px"><i class="g" style="left:16.79px">CONTRACTS</i><i class="c" style="left:348.91px">MARKET</i><i class="r" style="left:417.63px">S440</i><i class="r" style="left:446.26px">D1.94k</i><i class="r" style="left:486.34px">1.05</i><i class="y" style="left:537.88px">S730</i><i class="y" style="left:566.51px">D945</i><i class="y" style="left:595.14px">1.00</i><i class="c" style="left:658.13px">S230</i><i class="c" style="left:686.76px">D1.86k</i><i class="c" style="left:726.85px">1.05</i><i class="p" style="left:778.38px">S1.74k</i><i class="p" style="left:818.47px">D1.35k</i><i class="p" style="left:858.55px">0.98</i><i class="g" style="left:1162.05px">SPU</i></div>
</div>
</body></html>
